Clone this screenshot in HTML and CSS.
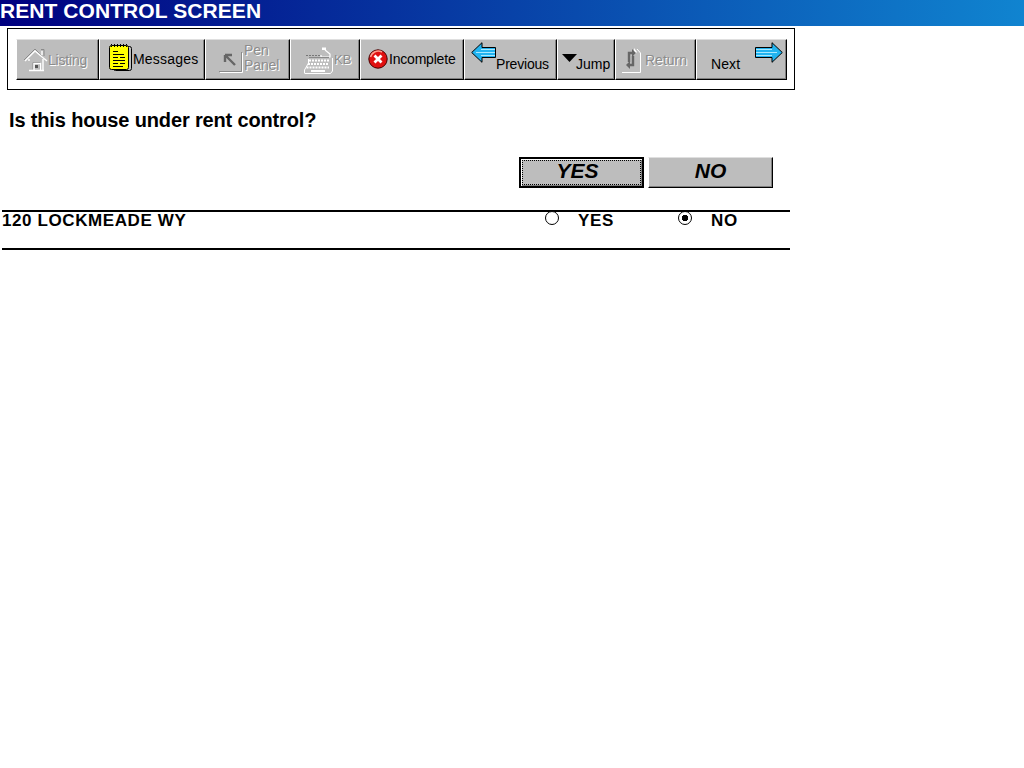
FILE: index.html
```html
<!DOCTYPE html>
<html lang="en">
<head>
  <meta charset="UTF-8" />
  <title>Rent Control Screen</title>
  <link rel="stylesheet" href="styles.css">
</head>
<body>
  <header class="title-bar">RENT CONTROL SCREEN</header>

  <div class="toolbar-box">
    <div class="toolbar">
      <button class="tool tool-listing" disabled>
        <svg width="25" height="24" viewBox="0 0 25 24"><g fill="none" stroke="#8a8a8a"><path d="M0 12 L11 1 L21 11"/><path d="M17 1.5 H20 V8"/><path d="M9 21.5 V14.5 H16 V21.5"/></g><g fill="none" stroke="#fff" stroke-width="1.4"><path d="M1 13 L11 3 L23 13"/><path d="M5 13 V11 M19 11 V22 M5 22.5 H20"/><path d="M18 3 V7"/><path d="M10 22 V15.5 H16.5 V22"/></g><rect x="11" y="17" width="3" height="3" fill="#555"/></svg>
        <span class="dim">Listing</span>
      </button>
      <button class="tool tool-messages">
        <svg width="23" height="27" viewBox="0 0 23 27"><rect x="4.5" y="2.5" width="18" height="24" rx="2" fill="#c0c0c0" stroke="#000"/><rect x="0.5" y="1.5" width="19" height="24" rx="2" fill="#ffff00" stroke="#000"/><path d="M2.5 0 V4 M5.5 0 V4 M8.5 0 V4 M11.5 0 V4 M14.5 0 V4 M17.5 0 V4" stroke="#000" stroke-dasharray="1 1"/><path d="M4 7.5 H9 M4 10.5 H15 M4 13.5 H9 M11 13.5 H16 M4 16.5 H16 M4 19.5 H9 M11 19.5 H16 M4 22.5 H14" stroke="#000"/></svg>
        <span>Messages</span>
      </button>
      <button class="tool tool-pen" disabled>
        <svg width="24" height="24" viewBox="0 0 24 24"><path d="M0 22.5 H22.5 V3" fill="none" stroke="#8a8a8a"/><path d="M1 23.5 H23.5 V4" fill="none" stroke="#fff"/><path d="M6 6 L16 16 M6 6 V13 M6 6 H13" fill="none" stroke="#666" stroke-width="2.4"/></svg>
        <span class="dim two-line">Pen<br>Panel</span>
      </button>
      <button class="tool tool-kb" disabled>
        <svg width="30" height="28" viewBox="0 0 30 28"><path d="M3 9.5 H18" stroke="#777" stroke-dasharray="2 1"/><path d="M19 1.5 H23 V4 H19 Z" fill="#fff"/><path d="M22 4 L27 8 V11 H18 V9" fill="none" stroke="#fff" stroke-width="1.2"/><path d="M6 11.5 H26" stroke="#8a8a8a"/><path d="M1.5 27.5 H27.5 L29.5 25 V12" fill="none" stroke="#fff"/><path d="M5.5 13 V17 L1.5 24 V27" fill="none" stroke="#fff"/><path d="M6 14.5 H26 M5 18 H26 M3.5 21.5 H26" stroke="#fff" stroke-width="2" stroke-dasharray="2 1"/><path d="M8 25 H22" stroke="#fff" stroke-width="2"/></svg>
        <span class="dim">KB</span>
      </button>
      <button class="tool tool-incomplete">
        <svg width="20" height="20" viewBox="0 0 20 20"><circle cx="10" cy="10" r="9.2" fill="#e01010" stroke="#400"/><path d="M2.5 8 A8 8 0 0 1 14 3" fill="none" stroke="#ff9a8a" stroke-width="1.5"/><path d="M6.5 6.5 L13.5 13.5 M13.5 6.5 L6.5 13.5" stroke="#fff" stroke-width="2.8"/></svg>
        <span>Incomplete</span>
      </button>
      <button class="tool tool-prev">
        <svg class="arrow" width="25" height="21" viewBox="0 0 25 21"><path d="M0.7 10.5 L11 0.7 V5.5 H24.5 V15.5 H11 V20.3 Z" fill="#22b4f0" stroke="#000"/><path d="M10 7.5 H24 M5 10.5 H24 M10 13.5 H24" stroke="#a8e8ff"/></svg>
        <span class="low">Previous</span>
      </button>
      <button class="tool tool-jump">
        <svg width="15" height="8" viewBox="0 0 15 8"><path d="M0 0 H15 L7.5 8 Z" fill="#000"/></svg>
        <span class="low-jump">Jump</span>
      </button>
      <button class="tool tool-return" disabled>
        <svg width="22" height="26" viewBox="0 0 22 26"><path d="M0 25.5 H18.5 V6 L15 2" fill="none" stroke="#fff"/><path d="M12 1 L15 5 L12 8 Z" fill="#fff"/><path d="M10 2 L14 6 L10 10 Z M8 14 L4 18 L8 22 Z" fill="#666"/><path d="M10 6 H7 V15 M8 18 H11 V9" fill="none" stroke="#666" stroke-width="2.4"/></svg>
        <span class="dim">Return</span>
      </button>
      <button class="tool tool-next">
        <span class="low-next">Next</span>
        <svg class="arrow" width="28" height="21" viewBox="0 0 28 21"><path d="M27.3 10.5 L17 0.7 V5.5 H0.5 V15.5 H17 V20.3 Z" fill="#22b4f0" stroke="#000"/><path d="M1 7.5 H17 M1 10.5 H22 M1 13.5 H17" stroke="#a8e8ff"/></svg>
      </button>
    </div>
  </div>

  <h1 class="question">Is this house under rent control?</h1>

  <div class="answers">
    <button class="answer answer-focus"><span>YES</span></button>
    <button class="answer answer-no"><span>NO</span></button>
  </div>

  <div class="row">
    <div class="address">120 LOCKMEADE WY</div>
    <label class="option option-yes"><input type="radio" name="rent"> YES</label>
    <label class="option option-no"><input type="radio" name="rent" checked> NO</label>
  </div>
</body>
</html>
```

FILE: styles.css
```css
body {
  margin: 0;
  background-color: #fff;
  font-family: "Liberation Sans", Arial, sans-serif;
  color: #000;
}

.title-bar {
  height: 26px;
  line-height: 22px;
  font-size: 21px;
  font-weight: bold;
  color: #fff;
  letter-spacing: 0.07px;
  background: linear-gradient(to right, #000080, #1084d0);
  white-space: nowrap;
}

/* Toolbar */
.toolbar-box {
  box-sizing: border-box;
  width: 788px;
  height: 62px;
  margin: 2px 0 0 7px;
  padding: 10px 7px 9px 8px;
  border: 1px solid #000;
}

.toolbar {
  display: flex;
  height: 41px;
}

.tool {
  box-sizing: border-box;
  display: flex;
  align-items: center;
  height: 41px;
  margin: 0;
  padding: 0;
  background-color: #bdbdbd;
  border: 1px solid #000;
  border-top-color: #dfdfdf;
  border-left-color: #fff;
  box-shadow: inset -1px -1px 0 #808080;
  font-family: "Liberation Sans", Arial, sans-serif;
  font-size: 14px;
  color: #000;
  text-align: left;
}

.dim {
  color: #8c8c8c;
  text-shadow: 1px 1px 0 #fff;
}

.two-line {
  line-height: 15px;
}

.tool-listing { width: 83px; padding-left: 7px; }
.tool-listing span { margin-left: -1px; letter-spacing: -0.2px; }
.tool-messages { width: 106px; padding-left: 9px; gap: 1px; }
.tool-messages svg { margin-top: -4px; }
.tool-messages span { margin-top: -2px; letter-spacing: 0.2px; }
.tool-pen { width: 85px; padding-left: 13px; gap: 1px; }
.tool-pen svg { margin-top: 2px; }
.tool-pen span { margin-top: -4px; letter-spacing: -0.1px; }
.tool-kb { width: 70px; padding-left: 12px; gap: 1px; font-size: 13px; }
.tool-incomplete { width: 104px; padding-left: 7px; gap: 1px; }
.tool-incomplete svg { margin-top: -2px; }
.tool-incomplete span { margin-top: -2px; letter-spacing: -0.2px; }
.tool-prev { width: 93px; padding-left: 6px; }
.tool-prev .arrow { align-self: flex-start; margin-top: 2px; }
.tool-prev .low { margin-top: 8px; letter-spacing: -0.2px; }
.tool-jump { width: 58px; padding-left: 4px; }
.tool-jump svg { margin-top: -3px; }
.low-jump { margin: 8px 0 0 -1px; }
.tool-return { width: 81px; padding-left: 6px; gap: 1px; }
.tool-next { width: 91px; padding-left: 14px; }
.low-next { margin-top: 8px; letter-spacing: 0.1px; }
.tool-next .arrow { align-self: flex-start; margin: 2px 0 0 15px; }

/* Question */
.question {
  margin: 19px 0 0 9px;
  font-size: 20px;
  line-height: 22px;
  font-weight: bold;
  letter-spacing: -0.15px;
}

.answers {
  display: flex;
  gap: 4px;
  margin: 26px 0 0 519px;
}

.answer {
  box-sizing: border-box;
  width: 125px;
  height: 31px;
  margin: 0;
  padding: 0 4px 3px 0;
  background-color: #bdbdbd;
  border: 1px solid #000;
  border-top-color: #dfdfdf;
  border-left-color: #fff;
  box-shadow: inset -1px -1px 0 #808080;
  font-family: "Liberation Sans", Arial, sans-serif;
  font-size: 21px;
  font-weight: bold;
  font-style: italic;
  color: #000;
}

.answer-no {
  padding-right: 0;
}

.answer-focus {
  padding: 0;
  border: 2px solid #000;
  box-shadow: inset 1px 1px 0 #fff, inset -1px -1px 0 #808080;
}

.answer-focus span {
  display: block;
  margin: 2px;
  padding: 0 8px 4px 0;
  height: 19px;
  line-height: 19px;
  outline: 1px dotted #000;
  outline-offset: 0;
}

/* Unit row */
.row {
  box-sizing: border-box;
  display: flex;
  width: 788px;
  height: 40px;
  margin: 22px 0 0 2px;
  border-top: 2px solid #000;
  border-bottom: 2px solid #000;
  font-size: 17px;
  font-weight: bold;
  line-height: 18px;
  letter-spacing: 0.6px;
}

.address {
  width: 541px;
}

.option {
  display: flex;
  align-items: flex-start;
}

.option-yes { width: 133px; }

.option input {
  appearance: none;
  box-sizing: border-box;
  width: 14px;
  height: 14px;
  margin: -1px 19px 0 2px;
  background-color: #fff;
  border: 1px solid #000;
  border-radius: 50%;
}

.option input:checked {
  background: radial-gradient(circle, #000 0, #000 3px, #fff 3.5px);
}
```
